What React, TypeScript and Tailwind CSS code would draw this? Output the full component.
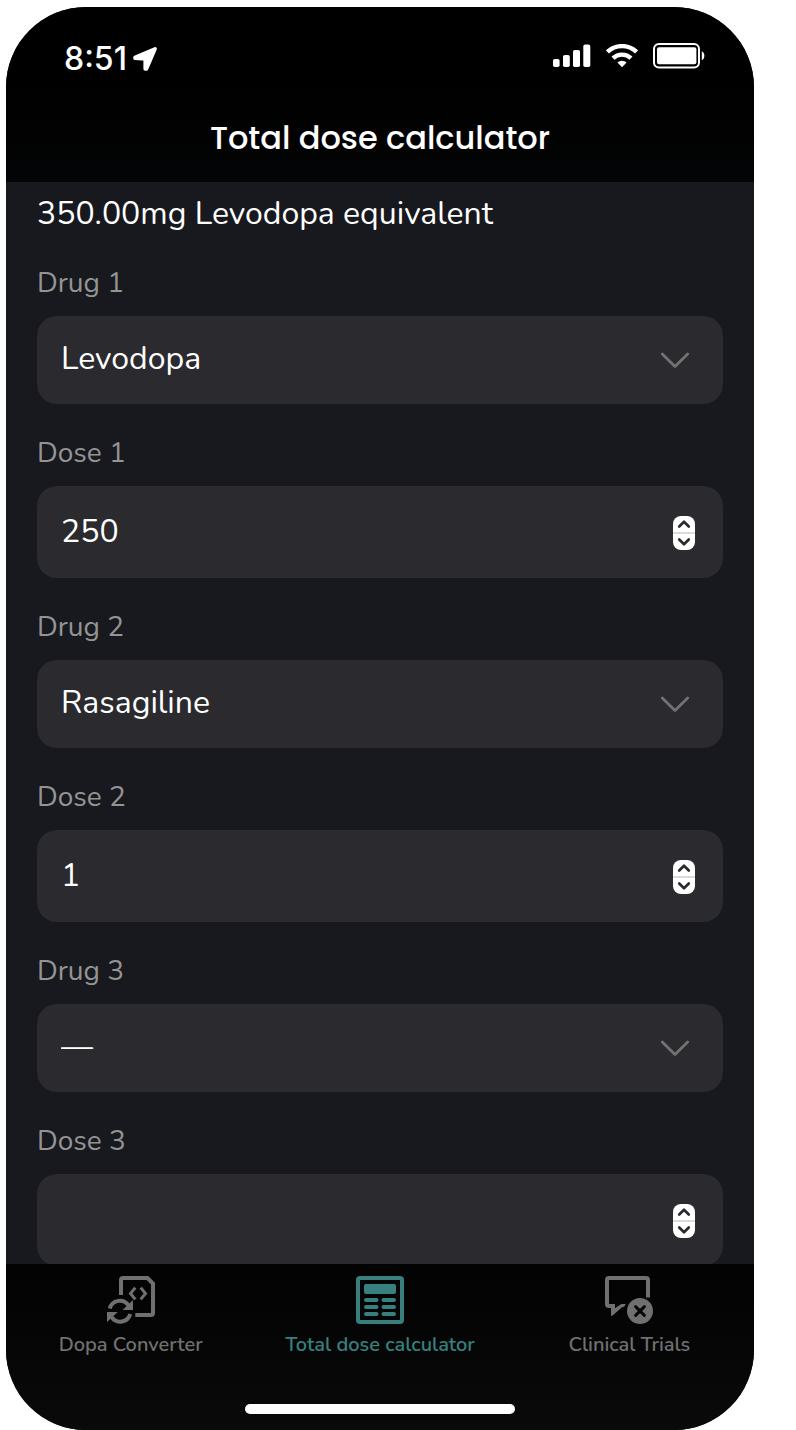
import { useState } from "react";
import type { ReactNode } from "react";

type Entry = { drug: string; dose: string };

const DRUGS = ["—", "Levodopa", "Rasagiline", "Pramipexole", "Ropinirole", "Selegiline"];

function LocationIcon() {
  return (
    <svg viewBox="0 0 24 24" className="size-6" aria-hidden="true">
      <path
        d="M22.1 1.9 13.4 22h-1.2V12L2 11.3v-.8z"
        fill="currentColor"
        stroke="currentColor"
        strokeWidth="3.6"
        strokeLinejoin="round"
      />
    </svg>
  );
}

function SignalIcon() {
  return (
    <svg viewBox="0 0 38 24" className="h-6 w-[38px]" fill="currentColor" aria-hidden="true">
      <rect x="0" y="15" width="6.6" height="8" rx="1.8" />
      <rect x="10" y="11" width="6.8" height="12" rx="1.8" />
      <rect x="20" y="6" width="7" height="17" rx="1.8" />
      <rect x="30.3" y="0.6" width="7" height="22.4" rx="1.8" />
    </svg>
  );
}

function WifiIcon() {
  return (
    <svg viewBox="0 0 32 24" className="h-6 w-8" aria-hidden="true">
      <g fill="none" stroke="currentColor" strokeWidth="4.4">
        <path d="M1.4 8a21 21 0 0 1 29.2 0" />
        <path d="M7 14.2a13 13 0 0 1 18 0" />
      </g>
      <path d="M11.4 18.5a6.6 6.6 0 0 1 9.2 0L16 23.2z" fill="currentColor" />
    </svg>
  );
}

function BatteryIcon() {
  return (
    <svg viewBox="0 0 52 26" className="h-[26px] w-[52px]" aria-hidden="true">
      <rect x="1" y="1" width="45" height="23.4" rx="5" fill="none" stroke="currentColor" strokeWidth="2" />
      <rect x="4" y="4.2" width="39.4" height="17" rx="2" fill="currentColor" />
      <path d="M48.8 8.2c3.4 1.4 3.4 7.6 0 9z" fill="currentColor" />
    </svg>
  );
}

function ConverterIcon() {
  return (
    <svg viewBox="0 0 48 48" className="size-12" fill="none" stroke="currentColor" aria-hidden="true">
      <path d="M14 19V4q0-2 2-2h24.5L46 7.5V37q0 2-2 2H28.3" strokeWidth="4" />
      <path d="m28.3 11.6-4.8 5.9 4.8 5.9M33.7 11.6l4.8 5.9-4.8 5.9" strokeWidth="3" />
      <path d="M2.8 32.5A10.4 10.4 0 0 1 21.6 29.5M23.2 38A10.4 10.4 0 0 1 4.6 41.2" strokeWidth="4" />
      <path d="M26 24v10H15.5zM0 46V36h10.8z" fill="currentColor" stroke="none" />
    </svg>
  );
}

function CalculatorIcon() {
  return (
    <svg viewBox="0 0 48 48" className="size-12" fill="currentColor" aria-hidden="true">
      <rect x="2" y="2" width="44" height="44" rx="2" fill="none" stroke="currentColor" strokeWidth="4" />
      <rect x="8" y="8" width="32" height="10" rx="2" />
      <rect x="8" y="22" width="14.5" height="4" rx="2" />
      <rect x="25.5" y="22" width="14.5" height="4" rx="2" />
      <rect x="8" y="29" width="14.5" height="4" rx="2" />
      <rect x="25.5" y="29" width="14.5" height="4" rx="2" />
      <rect x="8" y="36" width="14.5" height="4" rx="2" />
      <rect x="25.5" y="36" width="14.5" height="4" rx="2" />
    </svg>
  );
}

function TrialsIcon() {
  return (
    <svg viewBox="0 0 48 48" className="size-12" fill="none" stroke="currentColor" aria-hidden="true">
      <path d="M43 21.5V4q0-2-2-2H4q-2 0-2 2v24q0 2 2 2h4v6" strokeWidth="4" />
      <path d="M6 40v-5l10.2-7h4.6L19 31h-1.6L7.6 39.4z" fill="currentColor" stroke="none" />
      <circle cx="35" cy="35" r="13" fill="currentColor" stroke="none" />
      <path d="m30.6 30.6 8.8 8.8m0-8.8-8.8 8.8" stroke="#050606" strokeWidth="3" strokeLinecap="round" />
    </svg>
  );
}

function SelectField({ id, label, value, onChange }: {
  id: string; label: string; value: string; onChange: (value: string) => void;
}) {
  return (
    <div className="flex flex-col gap-4">
      <label htmlFor={id} className="text-[28px] leading-[34px] text-[#949494]">{label}</label>
      <div className="grid items-center rounded-[20px] bg-[#2a2a2f]">
        <select
          id={id}
          value={value}
          onChange={(e) => onChange(e.target.value)}
          className="col-start-1 row-start-1 h-[88px] w-full appearance-none rounded-[20px] bg-transparent pr-20 pb-0.5 pl-6 text-[32px] text-white outline-none"
        >
          {DRUGS.map((drug) => (
            <option key={drug} value={drug} className="bg-[#2a2a2f]">{drug}</option>
          ))}
        </select>
        <svg
          viewBox="0 0 32 20"
          className="pointer-events-none col-start-1 row-start-1 mr-8 h-5 w-8 justify-self-end text-[#727272]"
          fill="none"
          stroke="currentColor"
          strokeWidth="2.8"
          strokeLinecap="round"
          strokeLinejoin="round"
          aria-hidden="true"
        >
          <path d="m3.3 4 12.7 12.5L28.7 4" />
        </svg>
      </div>
    </div>
  );
}

function StepButton({ label, path, onClick }: { label: string; path: string; onClick: () => void }) {
  return (
    <button type="button" aria-label={label} onClick={onClick} className="flex flex-1 items-center justify-center text-[#2a2a2f]">
      <svg viewBox="0 0 14 10" className="h-2.5 w-3.5" fill="none" stroke="currentColor" strokeWidth="2.7" strokeLinecap="round" strokeLinejoin="round" aria-hidden="true">
        <path d={path} />
      </svg>
    </button>
  );
}

function NumberField({ id, label, value, onChange }: {
  id: string; label: string; value: string; onChange: (value: string) => void;
}) {
  const step = (by: number) => onChange(String(Math.max(0, Number(value || 0) + by)));
  return (
    <div className="flex flex-col gap-4">
      <label htmlFor={id} className="text-[28px] leading-[34px] text-[#949494]">{label}</label>
      <div className="flex items-center rounded-[20px] bg-[#2a2a2f] pr-7">
        <input
          id={id}
          type="number"
          value={value}
          onChange={(e) => onChange(e.target.value)}
          className="h-[92px] min-w-0 flex-1 appearance-none bg-transparent pr-4 pb-0.5 pl-6 text-[32px] text-white outline-none [-moz-appearance:textfield] [&::-webkit-inner-spin-button]:appearance-none"
        />
        <div className="mt-0.5 flex h-[34px] w-[22px] flex-col overflow-hidden rounded-[8px] bg-white">
          <StepButton label={`Increase ${label}`} path="m2.2 7.5 4.8-4.7 4.8 4.7" onClick={() => step(1)} />
          <div className="h-0.5 bg-[#dcdcdc]" />
          <StepButton label={`Decrease ${label}`} path="m2.2 2.5 4.8 4.7 4.8-4.7" onClick={() => step(-1)} />
        </div>
      </div>
    </div>
  );
}

function Tab({ label, icon, active = false }: { label: string; icon: ReactNode; active?: boolean }) {
  return (
    <a
      href="#"
      aria-current={active ? "page" : undefined}
      className={`flex flex-1 flex-col items-center gap-2 text-xl leading-[26px] font-semibold whitespace-nowrap ${active ? "text-[#38807f]" : "text-[#707070]"}`}
    >
      {icon}
      {label}
    </a>
  );
}

export default function App() {
  const [entries, setEntries] = useState<Entry[]>([
    { drug: "Levodopa", dose: "250" },
    { drug: "Rasagiline", dose: "1" },
    { drug: "—", dose: "" },
  ]);
  const update = (index: number, change: Partial<Entry>) =>
    setEntries((all) => all.map((entry, i) => (i === index ? { ...entry, ...change } : entry)));

  return (
    <div className="h-screen bg-white pt-[7px] pr-[42px] pl-1.5 font-['Nunito',Lato,sans-serif]">
      <div className="flex h-full flex-col overflow-hidden rounded-[80px] bg-[#18191e]">
        <header className="flex flex-col gap-[39px] bg-linear-to-b from-black to-[#040506] pt-8 pb-6 font-['Poppins',Inter,sans-serif] font-medium text-white">
          <div className="flex items-center justify-between pr-[49px] pl-[58px]">
            <div className="flex items-center gap-1.5 font-['Inter',sans-serif] text-[32px] leading-10">
              <span>8:51</span>
              <LocationIcon />
            </div>
            <div className="flex items-center gap-[15px] pb-1.5">
              <SignalIcon />
              <WifiIcon />
              <BatteryIcon />
            </div>
          </div>
          <h1 className="text-center text-[32px] leading-10">Total dose calculator</h1>
        </header>

        <main className="flex min-h-0 flex-1 flex-col gap-8 overflow-y-auto px-[31px] pt-3 [scrollbar-width:none]">
          <p className="text-[32px] leading-10 text-white">350.00mg Levodopa equivalent</p>
          {entries.map((entry, i) => (
            <div key={i} className="flex flex-col gap-8">
              <SelectField id={`drug-${i + 1}`} label={`Drug ${i + 1}`} value={entry.drug} onChange={(drug) => update(i, { drug })} />
              <NumberField id={`dose-${i + 1}`} label={`Dose ${i + 1}`} value={entry.dose} onChange={(dose) => update(i, { dose })} />
            </div>
          ))}
        </main>

        <footer className="flex flex-col items-center gap-[46px] bg-linear-to-b from-[#030303] to-[#0a0a0b] pt-3 pb-4">
          <nav className="flex w-full">
            <Tab label="Dopa Converter" icon={<ConverterIcon />} />
            <Tab label="Total dose calculator" icon={<CalculatorIcon />} active />
            <Tab label="Clinical Trials" icon={<TrialsIcon />} />
          </nav>
          <div className="h-2.5 w-[270px] rounded-full bg-white" />
        </footer>
      </div>
    </div>
  );
}
